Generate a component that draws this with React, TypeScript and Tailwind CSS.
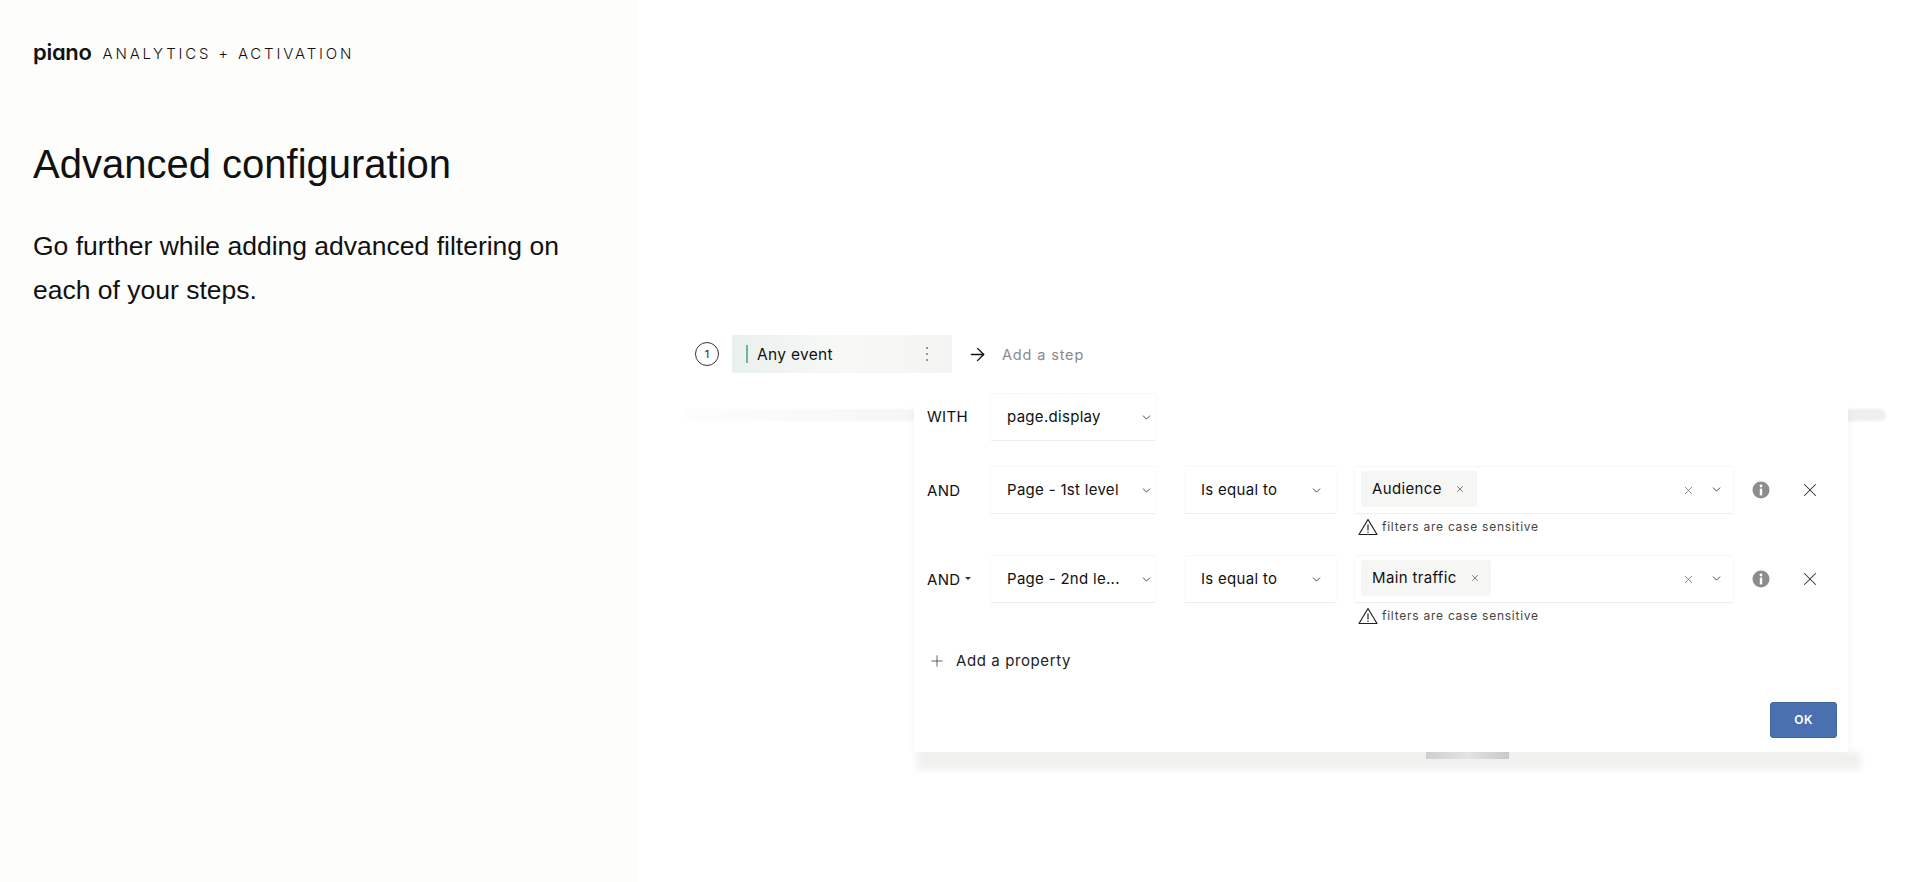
import React from "react";
import { ArrowRight, ChevronDown, Plus, X } from "lucide-react";

const Chevron = ({ className = "" }: { className?: string }) => (
  <ChevronDown size={13} strokeWidth={1.8} className={`text-[#444] ${className}`} />
);

const Select = ({ w, label, chevron }: { w: string; label: string; chevron: string }) => (
  <div className={`${w} h-12 shrink-0 flex items-center justify-between pl-4 border border-[#fbfbfa] border-t-[#f7f7f6] border-b-[#ededeb] rounded-[2px] bg-white`}>
    <span className="mt-[1px] text-[15px] text-[#111] tracking-[0.3px] whitespace-nowrap">{label}</span>
    <Chevron className={chevron} />
  </div>
);

const InfoIcon = () => (
  <svg width="18" height="18" viewBox="0 0 18 18" className="shrink-0">
    <circle cx="9" cy="9" r="8.5" fill="#8d8d8d" />
    <circle cx="9" cy="5" r="1.4" fill="#fff" />
    <rect x="7.8" y="7.6" width="2.4" height="6.8" fill="#fff" />
  </svg>
);

const Warn = () => (
  <div className="h-6 flex items-center gap-[4px] pl-[4px] pt-[2px]">
    <svg width="20" height="18" viewBox="0 0 20 18" className="shrink-0">
      <path d="M10 1.5 L19 16.5 H1 Z" fill="none" stroke="#222" strokeWidth="1.2" strokeLinejoin="round" />
      <path d="M10 6.5 V12.5" stroke="#222" strokeWidth="1.2" />
      <path d="M10 13.8 V15" stroke="#222" strokeWidth="1.2" />
    </svg>
    <span className="text-[12px] text-[#444] tracking-[0.75px] whitespace-nowrap">filters are case sensitive</span>
  </div>
);

const Row = ({ label, caret, field, chip, chipW }: { label: string; caret?: boolean; field: string; chip: string; chipW: string }) => (
  <div className="flex items-start">
    <div className="w-[63px] h-12 shrink-0 flex items-center gap-[5px] text-[15px] text-[#111] tracking-[0.3px]">
      <span className="mt-[2px]">{label}</span>
      {caret && <span className="w-0 h-0 border-x-[3px] border-x-transparent border-t-[3px] border-t-[#333] -mt-[1px]" />}
    </div>
    <Select w="w-[167px]" label={field} chevron="mr-[3px]" />
    <div className="w-[27px] shrink-0" />
    <Select w="w-[153px]" label="Is equal to" chevron="mr-[13px]" />
    <div className="w-[17px] shrink-0" />
    <div className="w-[380px] shrink-0">
      <div className="h-12 flex items-center pl-[6px] pr-[5px] border border-[#fafaf9] border-t-[#f6f6f5] border-b-[#ededeb] rounded-[2px]">
        <div className={`${chipW} h-9 -mt-[2px] flex items-center pl-[11px] gap-[13px] bg-[#f6f6f5] rounded-[2px]`}>
          <span className="text-[15px] text-[#111] tracking-[0.35px] whitespace-nowrap">{chip}</span>
          <X size={10} strokeWidth={1.6} className="text-[#444]" />
        </div>
        <X size={13} strokeWidth={1.2} className="ml-auto text-[#555]" />
        <Chevron className="ml-[15px] mr-[5px] -mt-[2px]" />
      </div>
      <Warn />
    </div>
    <div className="h-12 flex items-center pl-[18px]">
      <InfoIcon />
    </div>
    <div className="h-12 flex items-center pl-[29px]">
      <X size={22} strokeWidth={1.15} className="text-[#333]" />
    </div>
  </div>
);

export default function App() {
  return (
    <div className="flex h-[882px] w-full overflow-hidden bg-white font-['Inter',sans-serif]">
      <aside className="w-[638px] shrink-0 bg-[#fdfdfb] pl-[33px] font-['Liberation_Sans',sans-serif] text-[#111]">
        <div className="h-[30px] mt-[39px] flex items-center gap-[11px]">
          <span className="font-['Inter',sans-serif] font-semibold text-[22px] leading-none tracking-[-0.3px] [font-feature-settings:'cv11'] -mt-[4px]">piano</span>
          <span className="font-['Inter',sans-serif] font-light text-[15px] tracking-[2.8px] whitespace-nowrap">ANALYTICS + ACTIVATION</span>
        </div>
        <h1 className="mt-[71px] text-[40px] leading-[48px] font-normal whitespace-nowrap">Advanced configuration</h1>
        <p className="mt-[36px] w-[560px] text-[26.5px] leading-[44px]">Go further while adding advanced filtering on<br />each of your steps.</p>
      </aside>

      <main className="flex-1 pl-[47px] pt-[336px]">
        <div className="h-9 flex items-center">
          <div className="w-6 h-6 ml-[10px] rounded-full border border-[#333] flex items-center justify-center text-[11px] text-[#222]">1</div>
          <div className="w-[220px] h-[38px] ml-[13px] flex items-center pl-[14px] rounded-[2px] bg-gradient-to-r from-[#eaf0ed] via-[#f8f9f7] to-[#f4f5f3]">
            <span className="w-[2px] h-[18px] bg-[#6fb5a5]" />
            <span className="ml-[9px] mt-[2px] text-[15.5px] text-[#111] tracking-[0.3px]">Any event</span>
            <span className="ml-auto mr-[24px] flex flex-col gap-[4px]">
              <span className="w-[2px] h-[2px] rounded-full bg-[#777]" />
              <span className="w-[2px] h-[2px] rounded-full bg-[#777]" />
              <span className="w-[2px] h-[2px] rounded-full bg-[#777]" />
            </span>
          </div>
          <ArrowRight size={21} strokeWidth={1.6} className="ml-[15px] text-[#111]" />
          <span className="ml-[14px] mt-[1px] text-[14.5px] text-[#8a8a8a] tracking-[0.85px]">Add a step</span>
        </div>

        <div className="relative mt-[21px] w-[1201px]">
          <div className="absolute left-0 right-0 top-4 h-3 rounded-r-[6px] bg-gradient-to-r from-[#fdfdfd] via-[#ebebe9] to-[#efefed] blur-[1px]" />
          <div className="absolute left-[232px] w-[944px] top-[359px] h-[18px] bg-[#f1f1f0] blur-[3px]" />
          <div className="absolute left-[229px] top-4 w-[934px] h-[343px] shadow-[0_0_10px_rgba(0,0,0,0.05)]" />
          <div className="relative ml-[229px] w-[934px] h-[359px] bg-white pl-[13px] flex flex-col">
            <div className="flex items-start">
              <div className="w-[63px] h-12 flex items-center text-[15px] text-[#111] tracking-[0.3px]">WITH</div>
              <Select w="w-[167px]" label="page.display" chevron="mr-[3px]" />
            </div>
            <div className="mt-[25px]">
              <Row label="AND" field="Page - 1st level" chip="Audience" chipW="w-[116px]" />
            </div>
            <div className="mt-[17px]">
              <Row label="AND" caret field="Page - 2nd le..." chip="Main traffic" chipW="w-[130px]" />
            </div>
            <div className="mt-[22px] ml-[1px] h-6 flex items-center gap-[10px] text-[15px] text-[#222] tracking-[0.6px]">
              <Plus size={18} strokeWidth={1} className="text-[#333]" />
              Add a property
            </div>
            <button className="absolute right-[11px] bottom-[14px] w-[67px] h-9 rounded-[3px] bg-[#4a70b0] border border-[#41659f] text-[12px] font-semibold text-white tracking-[0.5px]">OK</button>
            <div className="absolute left-[512px] top-[359px] w-[83px] h-[7px] bg-gradient-to-r from-[#cfcfcf] via-[#e4e4e4] to-[#c9c9c9]" />
          </div>
        </div>
      </main>
    </div>
  );
}
